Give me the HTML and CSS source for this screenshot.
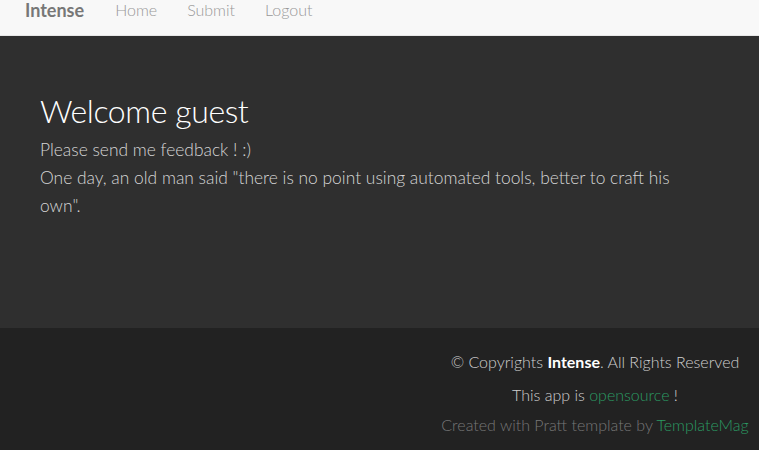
FILE: index.html
```html
<!DOCTYPE html>
<html>
<head>
<meta charset="utf-8">
<link rel="stylesheet" href="styles.css">
</head>
<body>
<nav class="navbar">
  <a class="brand" href="#">Intense</a>
  <ul class="nav">
    <li><a href="#">Home</a></li>
    <li><a href="#">Submit</a></li>
    <li><a href="#">Logout</a></li>
  </ul>
</nav>
<section class="hero">
  <div class="content">
    <h1>Welcome guest</h1>
    <p>Please send me feedback ! :)<br>One day, an old man said "there is no point using automated tools, better to craft his own".</p>
  </div>
</section>
<footer class="footer">
  <div class="col">
    <p class="copy">© Copyrights <strong>Intense</strong>. All Rights Reserved</p>
    <p class="app">This app is <a href="#">opensource</a> !</p>
    <p class="credit">Created with Pratt template by <a href="#">TemplateMag</a></p>
  </div>
</footer>
</body>
</html>
```
FILE: styles.css
```css
html, body { margin: 0; padding: 0; }
body {
  font-family: Lato, "Open Sans", sans-serif;
  font-weight: 300;
  background: #222222;
  width: 759px;
  height: 450px;
  overflow: hidden;
}
a { text-decoration: none; }
.navbar {
  height: 35px;
  background: #f8f8f8;
  border-bottom: 1px solid #e7e7e7;
  display: flex;
  align-items: flex-start;
  padding-left: 25px;
}
.brand {
  font-size: 18px;
  font-weight: 700;
  color: #777777;
  line-height: 20px;
  padding-top: 0;
  margin-right: 31px;
}
.nav {
  list-style: none;
  margin: 0;
  padding: 0;
  display: flex;
  gap: 30px;
}
.nav a {
  font-size: 16px;
  color: #999999;
  line-height: 20px;
  display: block;
  padding-top: 0;
}
.hero {
  background: #2f2f2f;
  height: 292px;
  box-sizing: border-box;
  padding: 55px 40px 0;
}
.content { width: 660px; }
h1 {
  margin: 0;
  font-family: Lato, sans-serif;
  font-weight: 300;
  font-size: 32px;
  letter-spacing: -0.4px;
  line-height: 40px;
  color: #ffffff;
}
.hero p {
  margin: 5px 0 0;
  font-size: 17.4px;
  line-height: 28px;
  color: #d6d6d6;
}
.footer {
  background: #222222;
  height: 122px;
  display: flex;
  justify-content: flex-end;
  padding-top: 24px;
  box-sizing: border-box;
}
.footer .col {
  width: 328px;
  text-align: center;
}
.footer p { margin: 0; font-size: 16px; line-height: 20px; }
.copy { color: #cfcfcf; }
.copy strong { color: #ffffff; font-weight: 700; }
.app { color: #cfcfcf; margin-top: 13px !important; }
.credit { color: #777777; margin-top: 10px !important; }
.footer a { color: #2b9a63; }
```
